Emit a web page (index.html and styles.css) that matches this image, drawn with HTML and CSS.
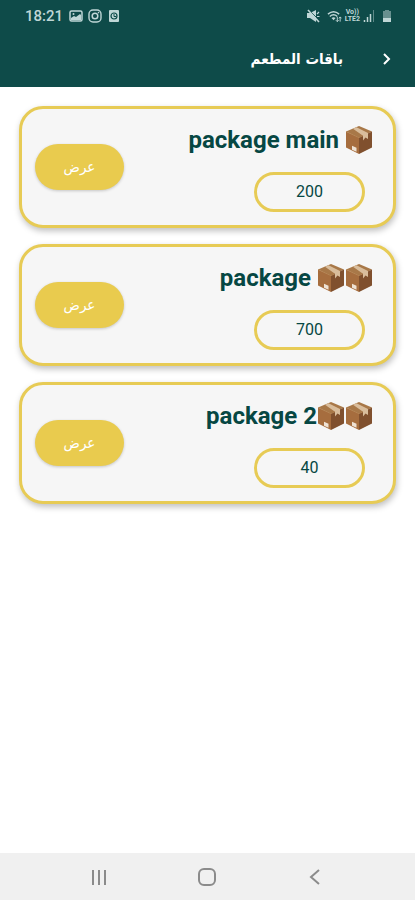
FILE: index.html
```
<!DOCTYPE html>
<html lang="ar" dir="rtl">
<head>
<meta charset="utf-8">
<meta name="viewport" content="width=device-width, initial-scale=1">
<title>باقات المطعم</title>
<link rel="stylesheet" href="styles.css">
</head>
<body>
<svg class="defs" aria-hidden="true">
  <symbol id="box" viewBox="0 0 28 28">
    <path fill="#a87848" d="M14 0 27 5.500 14 12 1 5.500Z"/>
    <path fill="#a66d3e" d="M1 5.500 14 11.500V28L1 21.500Z"/>
    <path fill="#80502e" d="M14 11.500 27 5.500V21.500L14 28Z"/>
    <path fill="#d9bd9c" d="M8 2.700 11.500 1.200 23 7V13L20.500 11.500 18 14.500V9.700Z"/>
    <path fill="#eee2d4" d="M7 19.800 11.500 21.800V25.800L7 23.800Z"/>
    <path fill="none" stroke="#b98a58" stroke-width=".6" d="M1 5.500 14 11.700 18 9.800"/>
  </symbol>
</svg>
<header class="top">
  <div class="status" dir="ltr">
    <div class="status-group">
      <span class="clock">18:21</span>
      <svg class="notice" viewBox="0 0 14 14"><rect x="1" y="2" width="12" height="10" rx="1.500" fill="none" stroke="currentColor" stroke-width="1.500"/><path fill="currentColor" d="M2 11V9l3-2 2 1 4-3 1 1v5Z"/><circle cx="4.500" cy="5" r="1" fill="currentColor"/></svg>
      <svg class="notice" viewBox="0 0 14 14"><rect x="1" y="1" width="12" height="12" rx="4" fill="none" stroke="currentColor" stroke-width="1.400"/><circle cx="7" cy="7" r="2.800" fill="none" stroke="currentColor" stroke-width="1.500"/><circle cx="10.500" cy="3.600" r=".8" fill="currentColor"/></svg>
      <svg class="notice" viewBox="0 0 14 14"><rect x="2" y="1" width="10" height="12" rx="1" fill="currentColor"/><circle cx="7" cy="7" r="3" fill="none" stroke="#0e4b49" stroke-width="1.200"/><path d="M7 5v2.500h2" fill="none" stroke="#0e4b49"/></svg>
    </div>
    <div class="status-group signals">
      <svg class="mute" viewBox="0 0 14 14"><path fill="currentColor" d="M1 4h3l6-3v12L4 9H1Z"/><path d="m3 1 11 11" stroke="#0e4b49"/><path d="m2 1 11 12" stroke="currentColor" stroke-width="1.600"/><path d="m11 5 2-2M11 7.500h2.500" stroke="currentColor" stroke-width="1.200"/></svg>
      <svg class="wifi" viewBox="0 0 16 14"><path d="M1 5q6-5 12 0M3 7.500q4-3.500 8 0" fill="none" stroke="currentColor" stroke-width="1.500"/><path d="m4.800 9 2.200 2.500L9.200 9Q7 7.500 4.800 9Z" fill="currentColor"/><path d="M11 8v5M9.500 11.500 11 13l1.500-1.500M14 13V8M12.700 9.500 14 8l1.500 1.500" fill="none" stroke="currentColor"/></svg>
      <span class="volte"><span>Vo))</span><span>LTE2</span></span>
      <svg class="bars" viewBox="0 0 12 14"><path d="M1.500 11v2M4.500 8v5M7.500 5v8" stroke="currentColor" stroke-width="1.500"/><path d="M10.500 1v12" stroke="currentColor" opacity=".45"/></svg>
      <svg class="battery" viewBox="0 0 10 14"><path fill="currentColor" opacity=".5" d="M3 1h4v1h2v8H1V2h2Z"/><path fill="currentColor" d="M1 9h8v4H1Z"/></svg>
    </div>
  </div>
  <div class="appbar">
    <button class="back" type="button" aria-label="رجوع"><svg viewBox="0 0 12 14"><path d="m3 2 5 5-5 5" fill="none" stroke="currentColor" stroke-width="2"/></svg></button>
    <h1>باقات المطعم</h1>
  </div>
</header>
<main>
  <article class="card">
    <div class="info">
      <h2 dir="ltr">package main <svg class="box"><use href="#box"/></svg></h2>
      <p class="amount">200</p>
    </div>
    <button class="view" type="button">عرض</button>
  </article>
  <article class="card">
    <div class="info">
      <h2 dir="ltr">package <svg class="box"><use href="#box"/></svg><svg class="box"><use href="#box"/></svg></h2>
      <p class="amount">700</p>
    </div>
    <button class="view" type="button">عرض</button>
  </article>
  <article class="card">
    <div class="info">
      <h2 dir="ltr">package 2<svg class="box"><use href="#box"/></svg><svg class="box"><use href="#box"/></svg></h2>
      <p class="amount">40</p>
    </div>
    <button class="view" type="button">عرض</button>
  </article>
</main>
<nav class="system" dir="ltr">
  <button type="button" aria-label="التطبيقات الأخيرة"><svg viewBox="0 0 18 18"><path d="M3 2v15M9 2v15M15 2v15" fill="none" stroke="currentColor" stroke-width="2"/></svg></button>
  <button type="button" aria-label="الرئيسية"><svg viewBox="0 0 18 18"><rect x="1" y="1" width="16" height="16" rx="5" fill="none" stroke="currentColor" stroke-width="2"/></svg></button>
  <button type="button" aria-label="السابق"><svg viewBox="0 0 18 18"><path d="m13 2-8 7 8 7" fill="none" stroke="currentColor" stroke-width="2"/></svg></button>
</nav>
</body>
</html>
```
FILE: styles.css
```
* { box-sizing: border-box; }

body {
  margin: 0;
  min-height: 100vh;
  display: flex;
  flex-direction: column;
  background: #fff;
  color: #064743;
  font-family: Roboto, "DejaVu Sans Condensed", "DejaVu Sans", sans-serif;
}

h1, h2, p { margin: 0; }

button {
  border: 0;
  padding: 0;
  background: none;
  color: inherit;
  font: inherit;
}

svg { display: block; }

.defs { position: absolute; width: 0; height: 0; }

.top {
  background: #0e4b49;
  color: #fff;
}

.status {
  display: flex;
  justify-content: space-between;
  align-items: center;
  height: 31px;
  padding: 0 22px 0 25px;
  color: #bfd6d6;
}

.status-group { display: flex; align-items: center; gap: 5px; }
.signals { gap: 3px; }

.clock { font-size: 15px; font-weight: 500; margin-right: 1px; }
.notice { width: 14px; height: 14px; }
.mute { width: 14px; height: 14px; margin-right: 4px; }
.wifi { width: 15px; height: 14px; }
.bars { width: 12px; height: 14px; }
.battery { width: 12px; height: 14px; margin-left: 3px; }

.volte {
  display: flex;
  flex-direction: column;
  align-items: center;
  font-size: 7px;
  font-weight: 700;
  line-height: 7px;
}

.appbar {
  display: flex;
  align-items: center;
  gap: 38px;
  height: 56px;
  padding: 0 22px;
}

.back svg { width: 12px; height: 14px; }

.appbar h1 {
  font-family: "DejaVu Sans Condensed", "DejaVu Sans", sans-serif;
  font-size: 15px;
  font-stretch: normal;
  line-height: 24px;
  font-weight: 700;
}

main {
  flex: 1;
  display: flex;
  flex-direction: column;
  gap: 16px;
  padding: 19px;
}

.card {
  display: flex;
  justify-content: space-between;
  align-items: center;
  padding: 13px 20px 13px 13px;
  background: #f6f6f6;
  border: 3px solid #e7cb55;
  border-radius: 24px;
  box-shadow: 1px 3px 6px rgb(0 0 0 / 25%);
}

.info {
  display: flex;
  flex-direction: column;
  align-items: flex-start;
  gap: 14px;
}

.info h2 {
  display: flex;
  align-items: center;
  white-space: pre;
  font-size: 24px;
  line-height: 36px;
  font-weight: 700;
}

.box { width: 28px; height: 28px; }

.amount {
  width: 111px;
  margin: 0 8px;
  border: 3px solid #e7cb55;
  border-radius: 20px;
  text-align: center;
  font-size: 16px;
  line-height: 34px;
}

.view {
  width: 89px;
  height: 46px;
  border-radius: 23px;
  background: #e9cb4e;
  box-shadow: 0 1px 3px rgb(0 0 0 / 20%);
  color: #fff;
  font-family: "DejaVu Sans Condensed", "DejaVu Sans", sans-serif;
  font-size: 15px;
}

.system {
  display: flex;
  justify-content: space-between;
  align-items: center;
  height: 47px;
  padding: 0 91px 0 90px;
  background: #f0f0f0;
  color: #8b8b8b;
}

.system svg { width: 18px; height: 18px; }
```
